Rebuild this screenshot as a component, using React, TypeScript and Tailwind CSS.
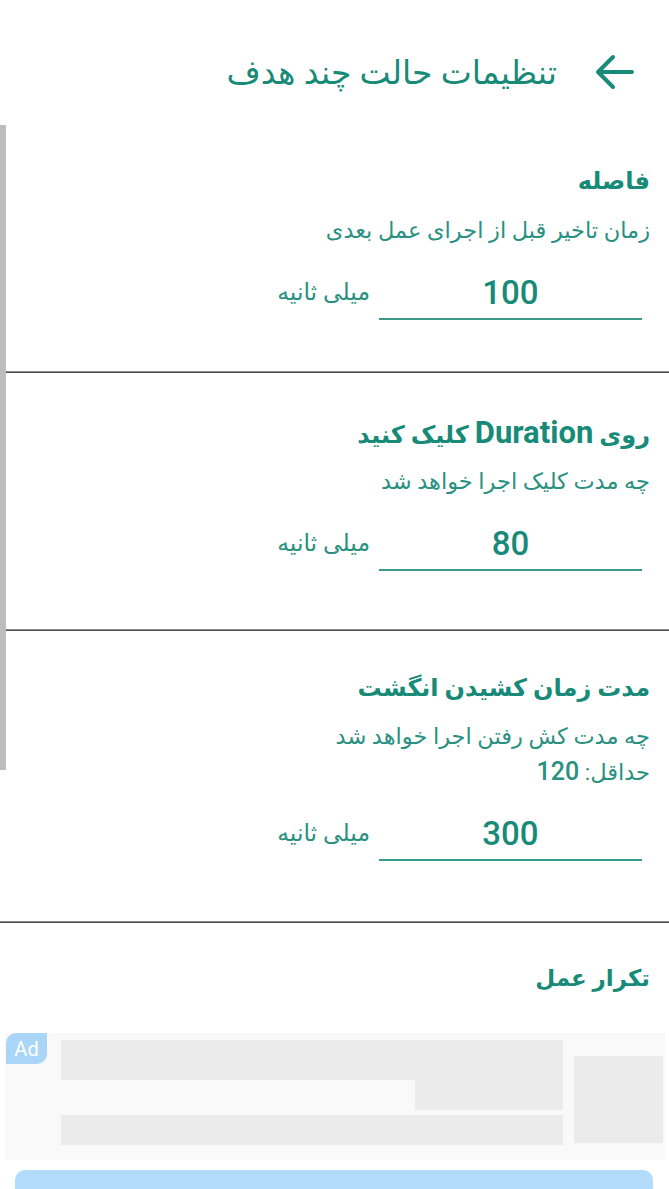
import React from "react";

const FONT = { fontFamily: "Roboto, 'DejaVu Sans', 'Noto Sans', sans-serif" };

function InputRow({ value }: { value: string }) {
  return (
    <div className="flex items-center pr-[27px]">
      <div className="w-[263px] flex flex-col items-center">
        <div className="h-[44px] flex items-center text-[33px] font-medium text-[#178a78] leading-none">
          {value}
        </div>
        <div className="w-full h-[2px] bg-[#3b9b8b] mt-[4px]"></div>
      </div>
      <div className="mr-[9px] text-[23.5px] text-[#2a9180] -mt-[4px]">میلی ثانیه</div>
    </div>
  );
}

export default function App() {
  return (
    <div dir="rtl" style={FONT} className="relative w-[669px] h-[1189px] overflow-hidden bg-white">
      {/* scrollbar */}
      <div className="absolute left-0 top-[125px] w-[6px] h-[645px] bg-[#bdbdbd]"></div>

      {/* header */}
      <div className="h-[123px] flex items-center pr-[35px] pt-[21px] gap-[37px]">
        <svg width="40" height="38" viewBox="0 0 40 38" fill="none">
          <path d="M38 19H4M19 4L4 19L19 34" stroke="#178a78" strokeWidth="4" strokeLinecap="round" strokeLinejoin="round" />
        </svg>
        <div className="text-[33px] text-[#178a78] leading-none">تنظیمات حالت چند هدف</div>
      </div>

      {/* section 1 */}
      <div className="h-[248px] pr-[19px] pt-[42px]">
        <div className="text-[24px] font-bold text-[#178a78] leading-[32px]">فاصله</div>
        <div className="text-[22.5px] text-[#2a9180] leading-[32px] mt-[17px]">زمان تاخیر قبل از اجرای عمل بعدی</div>
        <div className="-mr-[19px] mt-[24px]">
          <InputRow value="100" />
        </div>
      </div>
      <div className="h-[2px] bg-[#4d4d4d] border-t border-[#8a8a8a]"></div>

      {/* section 2 */}
      <div className="h-[256px] pr-[19px] pt-[44px]">
        <div className="text-[24px] font-bold text-[#178a78] leading-[32px]">
          روی <span className="font-bold text-[31px]">Duration</span> کلیک کنید
        </div>
        <div className="text-[22.5px] text-[#2a9180] leading-[32px] mt-[14px]">چه مدت کلیک اجرا خواهد شد</div>
        <div className="-mr-[19px] mt-[24px]">
          <InputRow value="80" />
        </div>
      </div>
      <div className="h-[2px] bg-[#4d4d4d] border-t border-[#8a8a8a]"></div>

      {/* section 3 */}
      <div className="h-[290px] pr-[19px] pt-[41px]">
        <div className="text-[24px] font-bold text-[#178a78] leading-[32px]">مدت زمان کشیدن انگشت</div>
        <div className="text-[22.5px] text-[#2a9180] leading-[36px] mt-[14px]">
          <div>چه مدت کش رفتن اجرا خواهد شد</div>
          <div>
            حداقل: <span className="font-medium text-[25px]">120</span>
          </div>
        </div>
        <div className="-mr-[19px] mt-[21px]">
          <InputRow value="300" />
        </div>
      </div>
      <div className="h-[2px] bg-[#4d4d4d] border-t border-[#8a8a8a]"></div>

      {/* section 4 */}
      <div className="pr-[19px] pt-[40px]">
        <div className="text-[23px] font-bold text-[#178a78] leading-[32px]">تکرار عمل</div>
      </div>

      {/* ad */}
      <div dir="ltr" className="absolute left-[5px] right-[4px] top-[1033px] h-[127px] bg-[#f9f9f9]">
        <div className="absolute left-[1px] top-0 w-[41px] h-[31px] bg-[#a9d5f6] rounded-tl-[10px] rounded-br-[10px] flex items-center justify-center text-white text-[20px]" style={{ fontFamily: "Roboto, sans-serif" }}>
          Ad
        </div>
        <div className="flex gap-[11px] pl-[56px] pt-[7px]">
          <div className="w-[502px] flex flex-col">
            <div className="h-[40px] bg-[#ebebeb]"></div>
            <div className="flex">
              <div className="flex-1"></div>
              <div className="w-[148px] h-[30px] bg-[#ebebeb]"></div>
            </div>
            <div className="h-[30px] bg-[#ebebeb] mt-[5px]"></div>
          </div>
          <div className="w-[89px] h-[87px] mt-[16px] bg-[#ebebeb]"></div>
        </div>
      </div>
      <div className="absolute left-[15px] w-[638px] top-[1170px] h-[30px] bg-[#b3dbfb] rounded-t-[10px]"></div>
    </div>
  );
}
